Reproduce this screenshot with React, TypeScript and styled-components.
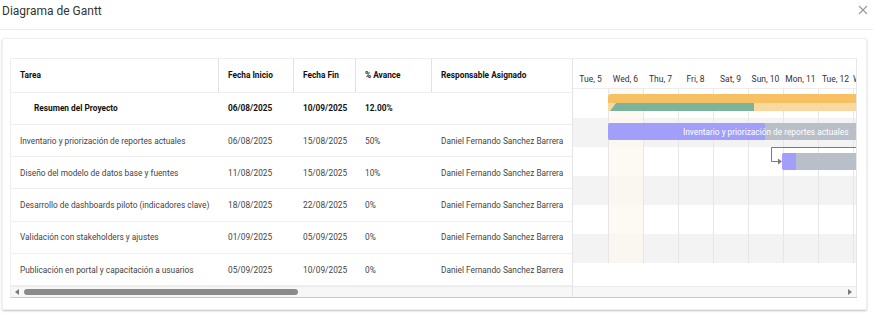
import React from "react";
import styled, { createGlobalStyle } from "styled-components";

const GlobalStyle = createGlobalStyle`
  body {
    margin: 0;
    background: #ffffff;
    font-family: Roboto, "Liberation Sans", sans-serif;
    color: #333;
  }
`;

const Modal = styled.div`
  width: 873px;
  height: 314px;
  background: #fff;
  overflow: hidden;
`;

const ModalHeader = styled.div`
  display: flex;
  align-items: center;
  justify-content: space-between;
  height: 30px;
  padding: 0 4px 0 2px;
  border-bottom: 1px solid #ececec;
  box-sizing: border-box;
`;

const Title = styled.h2`
  margin: 0 0 8px;
  font-size: 12px;
  font-weight: 400;
  color: #333;
`;

const CloseBtn = styled.button`
  border: 0;
  background: none;
  padding: 0;
  margin-bottom: 11px;
  width: 12px;
  height: 12px;
  cursor: pointer;
`;

const ModalBody = styled.div`
  padding: 8px 6px 0 2px;
`;

const Card = styled.div`
  height: 272px;
  box-sizing: border-box;
  border: 1px solid #f0f0f0;
  border-radius: 2px;
  box-shadow: 0 1px 2px rgba(0, 0, 0, 0.25);
  padding: 19px 9px 0 7px;
`;

const Gantt = styled.div`
  display: flex;
  height: 240px;
  border-top: 1px solid #ededed;
  border-left: 1px solid #f0f0f0;
  border-bottom: 1px solid #c9c9c9;
  box-sizing: border-box;
`;

const GridPane = styled.div`
  width: 561px;
  display: flex;
  flex-direction: column;
`;

const Row = styled.div<{ $head?: boolean; $bold?: boolean }>`
  display: grid;
  grid-template-columns: 208px 75px 62px 76px 140px;
  height: ${({ $head }) => ($head ? "34px" : "32.5px")};
  align-items: center;
  border-bottom: 1px solid #efefef;
  box-sizing: border-box;
  font-size: 8.3px;
  font-weight: ${({ $bold, $head }) => ($bold || $head ? 700 : 400)};
  color: ${({ $bold, $head }) => ($bold || $head ? "#111" : "#444")};
`;

const Cell = styled.div<{ $head?: boolean; $indent?: boolean }>`
  height: 100%;
  display: flex;
  align-items: center;
  padding-left: ${({ $indent }) => ($indent ? "23px" : "9px")};
  border-right: ${({ $head }) => ($head ? "1px solid #e2e2e2" : "0")};
  white-space: nowrap;
  overflow: hidden;
  box-sizing: border-box;
  &:last-child {
    border-right: 0;
  }
`;

const Spacer = styled.div`
  flex: 1;
`;

const ScrollTrack = styled.div<{ $end?: boolean }>`
  height: 10px;
  display: flex;
  align-items: center;
  justify-content: ${({ $end }) => ($end ? "flex-end" : "flex-start")};
  gap: 5px;
  padding: 0 4px;
  background: #f7f7f7;
  border-top: 1px solid #ececec;
`;

const Arrow = styled.span<{ $dir: "left" | "right" }>`
  width: 0;
  height: 0;
  border-top: 3px solid transparent;
  border-bottom: 3px solid transparent;
  ${({ $dir }) =>
    $dir === "left" ? "border-right: 4px solid #7a7a7a;" : "border-left: 4px solid #7a7a7a;"}
`;

const Thumb = styled.div`
  width: 274px;
  height: 6px;
  border-radius: 3px;
  background: #8b8b8b;
`;

const ChartPane = styled.div`
  flex: 1;
  display: flex;
  flex-direction: column;
  border-left: 1px solid #e4e4e4;
  border-right: 1px solid #e6e6e6;
  overflow: hidden;
`;

const ChartHead = styled.div`
  display: flex;
  height: 30px;
  align-items: flex-end;
  padding-bottom: 4px;
  box-sizing: border-box;
  border-bottom: 1px solid #ececec;
  overflow: hidden;
`;

const DayLabel = styled.div<{ $cut?: boolean }>`
  flex: 0 0 35px;
  text-align: ${({ $cut }) => ($cut ? "left" : "center")};
  font-size: 8.5px;
  color: #333;
  white-space: nowrap;
`;

const ChartBody = styled.div`
  position: relative;
  height: 174px;
`;

const ChartRow = styled.div<{ $shade?: boolean }>`
  height: 29px;
  background: ${({ $shade }) => ($shade ? "#f3f3f3" : "#fff")};
`;

const Overlay = styled.svg`
  position: absolute;
  left: 0;
  top: 0;
`;

const BarLabel = styled.text`
  font-family: Roboto, "Liberation Sans", sans-serif;
  font-size: 8.3px;
  fill: #fff;
`;

const tasks = [
  ["Inventario y priorización de reportes actuales", "06/08/2025", "15/08/2025", "50%"],
  ["Diseño del modelo de datos base y fuentes", "11/08/2025", "15/08/2025", "10%"],
  ["Desarrollo de dashboards piloto (indicadores clave)", "18/08/2025", "22/08/2025", "0%"],
  ["Validación con stakeholders y ajustes", "01/09/2025", "05/09/2025", "0%"],
  ["Publicación en portal y capacitación a usuarios", "05/09/2025", "10/09/2025", "0%"],
];

const days = ["Tue, 5", "Wed, 6", "Thu, 7", "Fri, 8", "Sat, 9", "Sun, 10", "Mon, 11", "Tue, 12", "Wed, 13"];

const App = () => {
  const colW = 35;
  return (
    <Modal>
      <GlobalStyle />
      <ModalHeader>
        <Title>Diagrama de Gantt</Title>
        <CloseBtn aria-label="close">
          <svg width="10" height="10" viewBox="0 0 10 10">
            <path d="M1 1L9 9M9 1L1 9" stroke="#999" strokeWidth="1.1" />
          </svg>
        </CloseBtn>
      </ModalHeader>
      <ModalBody>
        <Card>
          <Gantt>
            <GridPane>
              <Row $head>
                <Cell $head>Tarea</Cell>
                <Cell $head>Fecha Inicio</Cell>
                <Cell $head>Fecha Fin</Cell>
                <Cell $head>% Avance</Cell>
                <Cell $head>Responsable Asignado</Cell>
              </Row>
              <Row $bold>
                <Cell $indent>Resumen del Proyecto</Cell>
                <Cell>06/08/2025</Cell>
                <Cell>10/09/2025</Cell>
                <Cell>12.00%</Cell>
                <Cell />
              </Row>
              {tasks.map(([name, start, end, pct]) => (
                <Row key={name}>
                  <Cell>{name}</Cell>
                  <Cell>{start}</Cell>
                  <Cell>{end}</Cell>
                  <Cell>{pct}</Cell>
                  <Cell>Daniel Fernando Sanchez Barrera</Cell>
                </Row>
              ))}
              <Spacer />
              <ScrollTrack>
                <Arrow $dir="left" />
                <Thumb />
              </ScrollTrack>
            </GridPane>
            <ChartPane>
              <ChartHead>
                {days.map((d, i) => (
                  <DayLabel key={d} $cut={i === days.length - 1}>
                    {d}
                  </DayLabel>
                ))}
              </ChartHead>
              <ChartBody>
                {[0, 1, 2, 3, 4, 5].map((i) => (
                  <ChartRow key={i} $shade={i % 2 === 1} />
                ))}
                <Overlay width="284" height="174" viewBox="0 0 284 174">
                  <rect x={colW} y="0" width={colW} height="174" fill="#fbf8ec" opacity="0.7" />
                  {[1, 2, 3, 4, 5, 6, 7, 8].map((c) => (
                    <line key={c} x1={c * colW + 0.5} y1="0" x2={c * colW + 0.5} y2="174" stroke="#e6e6e6" />
                  ))}
                  {/* resumen */}
                  <path d="M35 8 Q35 5 38 5 H284 V14 H35 Z" fill="#f7c163" />
                  <rect x="35" y="14" width="249" height="8" fill="#fad9a0" />
                  <path d="M37 22 L43 14 H181 V22 Z" fill="#7cb49b" />
                  {/* tarea 1 */}
                  <rect x="35" y="34" width="260" height="17" rx="2" fill="#b8bfc8" />
                  <path d="M37 34 H192 V51 H37 Q35 51 35 49 V36 Q35 34 37 34 Z" fill="#a29ffb" />
                  <BarLabel x="110" y="45.5">Inventario y priorización de reportes actuales</BarLabel>
                  {/* dependencia */}
                  <path d="M284 58.5 H198.5 V72.5 H206" fill="none" stroke="#7a7a7a" strokeWidth="1" />
                  <path d="M205 69.5 L209 72.5 L205 75.5 Z" fill="#7a7a7a" />
                  {/* tarea 2 */}
                  <rect x="209" y="64" width="80" height="17" rx="2" fill="#b8bfc8" />
                  <path d="M211 64 H223 V81 H211 Q209 81 209 79 V66 Q209 64 211 64 Z" fill="#a29ffb" />
                </Overlay>
              </ChartBody>
              <Spacer />
              <ScrollTrack $end>
                <Arrow $dir="right" />
              </ScrollTrack>
            </ChartPane>
          </Gantt>
        </Card>
      </ModalBody>
    </Modal>
  );
};

export default App;
